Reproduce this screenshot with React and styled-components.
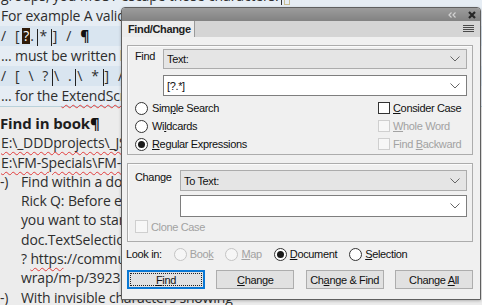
import React from "react";
import styled, { createGlobalStyle } from "styled-components";

const ui = `"Liberation Sans", Arial, sans-serif`;

const GlobalStyle = createGlobalStyle`
  html, body {
    margin: 0;
    padding: 0;
  }
  body {
    background: #ececec;
    overflow: hidden;
  }
`;

const Page = styled.div`
  position: relative;
  width: 482px;
  height: 305px;
  overflow: hidden;
  background: #ececec;
`;

/* ---------- document behind the panel ---------- */

const Doc = styled.div`
  margin-top: -14px;
  font-family: "Open Sans", "Noto Sans", sans-serif;
  font-size: 14px;
  letter-spacing: -0.15px;
  color: #2e2e2e;
  white-space: nowrap;
`;

const Block = styled.div`
  background: #e6edf4;
  border-bottom: 1px solid #b9d1da;
`;

const Line = styled.div`
  height: ${({ h }) => h || 19.3}px;
  line-height: ${({ h }) => h || 19.3}px;
  padding-left: 1px;
  background: ${({ code }) => (code ? "#d9e5f0" : "transparent")};
  letter-spacing: ${({ code }) => (code ? "2.6px" : "inherit")};
`;

const Hl = styled.span`
  display: inline-block;
  background: #2f1b09;
  color: #fff;
  line-height: 16px;
  padding: 0 1px;
  letter-spacing: 0;
`;

const Mark = styled.span`
  display: inline-block;
  width: 1px;
  height: 17px;
  background: #222;
  vertical-align: middle;
  margin: 0 1px;
`;

const Pilcrow = styled.span`
  font-weight: 700;
  color: #111;
`;

const Caret = styled.span`
  display: inline-block;
  width: 1px;
  height: 15px;
  background: #333;
  vertical-align: middle;
  margin-left: 2px;
  & + span {
    display: inline-block;
    width: 4px;
    height: 13px;
    margin-left: 2px;
    border: 1px solid #c9bd92;
    vertical-align: middle;
  }
`;

const Spell = styled.span`
  text-decoration: underline wavy #e23b3b;
  text-decoration-thickness: 1px;
  text-underline-offset: 3px;
`;

const Heading = styled.div`
  margin-top: 7px;
  height: 19.3px;
  line-height: 19.3px;
  font-size: 15px;
  font-weight: 700;
  color: #1e1e1e;
`;

const Item = styled.div`
  display: grid;
  grid-template-columns: 20px auto;
`;

const Marker = styled.div`
  line-height: 19.3px;
`;

/* ---------- Find/Change panel ---------- */

const Panel = styled.div`
  position: absolute;
  left: 121px;
  top: 7px;
  width: 360px;
  height: 293px;
  box-sizing: border-box;
  border: 1px solid #5f5f5f;
  border-radius: 4px 4px 0 0;
  overflow: hidden;
  background: #f0f0f0;
  font-family: ${ui};
  font-size: 11px;
  letter-spacing: -0.35px;
  color: #111;
  white-space: nowrap;
  box-shadow: 0 1px 3px rgba(0, 0, 0, 0.25);
`;

const TitleBar = styled.div`
  height: 13px;
  background: linear-gradient(#9c9c9c, #828282);
  display: flex;
  align-items: center;
  justify-content: flex-end;
  gap: 12px;
  padding-right: 4px;
`;

const TabStrip = styled.div`
  height: 16px;
  background: #d5d5d5;
  display: flex;
  align-items: stretch;
`;

const Tab = styled.div`
  width: 66px;
  padding-left: 6px;
  background: #ececec;
  border-right: 1px solid #9a9a9a;
  font-weight: 700;
  font-size: 11px;
  line-height: 16px;
  color: #222;
`;

const MenuButton = styled.div`
  margin-left: auto;
  margin-right: 6px;
  display: flex;
  align-items: center;
`;

const Body = styled.div`
  padding: 8px 7px 0 5px;
  display: flex;
  flex-direction: column;
`;

const Group = styled.div`
  border: 1px solid #acacac;
  box-shadow: inset 1px 1px 0 #fbfbfb;
  padding: ${({ pad }) => pad};
  margin-top: ${({ mt }) => mt || 0}px;
`;

const Fields = styled.div`
  display: grid;
  grid-template-columns: ${({ labelW }) => labelW}px 1fr;
  row-gap: ${({ gap }) => gap}px;
`;

const FieldLabel = styled.div`
  line-height: 14px;
  grid-row: span 2;
`;

const Select = styled.div`
  height: ${({ h }) => h}px;
  box-sizing: border-box;
  border: 1px solid #acacac;
  background: #e5e5e5;
  display: flex;
  align-items: center;
  justify-content: space-between;
  padding: 0 6px 0 3px;
`;

const Input = styled(Select)`
  background: #fff;
  border-color: #7e7e7e;
`;

const Options = styled.div`
  margin-top: 3px;
  display: grid;
  grid-template-columns: 1fr 89px;
  grid-auto-flow: column;
  grid-template-rows: repeat(3, 18px);
`;

const Choice = styled.label`
  display: flex;
  align-items: center;
  gap: ${({ gap }) => gap || 4}px;
  color: ${({ disabled }) => (disabled ? "#a2a2a2" : "#111")};
`;

const RadioDot = styled.span`
  width: 13px;
  height: 13px;
  box-sizing: border-box;
  border-radius: 50%;
  border: 1px solid ${({ disabled }) => (disabled ? "#c4c4c4" : "#333")};
  background: ${({ disabled }) => (disabled ? "#f6f6f6" : "#fff")};
  display: flex;
  align-items: center;
  justify-content: center;
  flex: none;

  &::after {
    content: "";
    width: 7px;
    height: 7px;
    border-radius: 50%;
    background: #1a1a1a;
    display: ${({ checked }) => (checked ? "block" : "none")};
  }
`;

const CheckBox = styled.span`
  width: ${({ size }) => size || 12}px;
  height: ${({ size }) => size || 12}px;
  box-sizing: border-box;
  border: 1px solid ${({ disabled }) => (disabled ? "#cfcfcf" : "#333")};
  background: ${({ disabled }) => (disabled ? "#f7f7f7" : "#fff")};
  flex: none;
`;

const U = styled.span`
  text-decoration: underline;
  text-underline-offset: 1px;
`;

const CloneRow = styled.div`
  margin-top: 1px;
  height: 17px;
  display: flex;
  align-items: center;
`;

const LookIn = styled.div`
  margin-top: 4px;
  margin-left: -1px;
  height: 16px;
  display: flex;
  align-items: center;
  gap: 12px;
`;

const ButtonRow = styled.div`
  margin-top: 8px;
  display: flex;
  justify-content: space-between;
`;

const Button = styled.div`
  width: 78px;
  height: 19px;
  box-sizing: border-box;
  border: 1px solid ${({ primary }) => (primary ? "#0a78d4" : "#adadad")};
  box-shadow: ${({ primary }) => (primary ? "inset 0 0 0 1px #0a78d4" : "none")};
  background: #e1e1e1;
  display: flex;
  align-items: center;
  justify-content: center;
  padding: 2px;
`;

const FocusRing = styled.span`
  flex: 1;
  align-self: stretch;
  display: flex;
  align-items: center;
  justify-content: center;
  outline: 1px dotted #222;
  outline-offset: -1px;
`;

const Chevron = () => (
  <svg width="10" height="6" viewBox="0 0 10 6">
    <polyline points="0.5,0.5 5,5 9.5,0.5" fill="none" stroke="#666" strokeWidth="1" />
  </svg>
);

const Radio = ({ label, checked, disabled, gap }) => (
  <Choice disabled={disabled} gap={gap}>
    <RadioDot checked={checked} disabled={disabled} />
    <span>{label}</span>
  </Choice>
);

const Check = ({ label, disabled, size, gap }) => (
  <Choice disabled={disabled} gap={gap || 3}>
    <CheckBox disabled={disabled} size={size} />
    <span>{label}</span>
  </Choice>
);

const FindChange = () => (
  <Panel>
    <TitleBar>
      <svg width="8" height="6" viewBox="0 0 8 6">
        <polyline points="3.5,0.5 1,3 3.5,5.5" fill="none" stroke="#d2d2d2" strokeWidth="1.2" />
        <polyline points="7.5,0.5 5,3 7.5,5.5" fill="none" stroke="#d2d2d2" strokeWidth="1.2" />
      </svg>
      <svg width="8" height="8" viewBox="0 0 8 8">
        <path d="M1 1 L7 7 M7 1 L1 7" stroke="#262626" strokeWidth="2.2" />
      </svg>
    </TitleBar>
    <TabStrip>
      <Tab>Find/Change</Tab>
      <MenuButton>
        <svg width="11" height="8" viewBox="0 0 11 8">
          <path d="M0 0.5 H11 M0 2.5 H11 M0 4.5 H11 M0 6.5 H11" stroke="#4a4a4a" strokeWidth="1" />
        </svg>
      </MenuButton>
    </TabStrip>
    <Body>
      <Group pad="3px 5px 1px 7px">
        <Fields labelW={28} gap={6}>
          <FieldLabel>Find</FieldLabel>
          <Select h={20}>
            <span>Text:</span>
            <Chevron />
          </Select>
          <Input h={21}>
            <span>[?.*]</span>
            <Chevron />
          </Input>
        </Fields>
        <Options>
          <Radio label={<>Sim<U>p</U>le Search</>} />
          <Radio label={<>Wi<U>l</U>dcards</>} />
          <Radio label={<><U>R</U>egular Expressions</>} checked />
          <Check label={<><U>C</U>onsider Case</>} />
          <Check label={<><U>W</U>hole Word</>} disabled />
          <Check label={<>Find <U>B</U>ackward</>} disabled />
        </Options>
      </Group>

      <Group pad="6px 5px 6px 7px" mt={8}>
        <Fields labelW={45} gap={4}>
          <FieldLabel>Change</FieldLabel>
          <Select h={21}>
            <span>To Text:</span>
            <Chevron />
          </Select>
          <Input h={22}>
            <span />
            <Chevron />
          </Input>
        </Fields>
        <CloneRow>
          <Check label="Clone Case" disabled size={13} />
        </CloneRow>
      </Group>

      <LookIn>
        <span>Look in:</span>
        <Radio label={<>Boo<U>k</U></>} disabled gap={3} />
        <Radio label={<><U>M</U>ap</>} disabled gap={3} />
        <Radio label={<><U>D</U>ocument</>} checked gap={3} />
        <Radio label={<><U>S</U>election</>} gap={3} />
      </LookIn>

      <ButtonRow>
        <Button primary>
          <FocusRing>
            <span>
              <U>F</U>ind
            </span>
          </FocusRing>
        </Button>
        <Button>
          <span>
            <U>C</U>hange
          </span>
        </Button>
        <Button>
          <span>
            Ch<U>a</U>nge &amp; Find
          </span>
        </Button>
        <Button>
          <span>
            Change <U>A</U>ll
          </span>
        </Button>
      </ButtonRow>
    </Body>
  </Panel>
);

export default function App() {
  return (
    <Page>
      <GlobalStyle />
      <Doc>
        <Block>
          <Line h={20}>
            groups, you MUST escape those characters.
            <Caret />
            <span />
          </Line>
          <Line h={20}>For example A valid GREP expression like</Line>
          <Line h={20} code>
            / [<Hl>?</Hl>.<Mark />*<Mark />] / <Pilcrow>¶</Pilcrow>
          </Line>
          <Line h={20}>... must be written like this in the script</Line>
          <Line h={20} code>
            / [ \ ?<Mark />\ .<Mark />\ *<Mark />] / <Pilcrow>¶</Pilcrow>
          </Line>
          <Line h={20}>
            ... for the <Spell>ExtendScript</Spell> string
          </Line>
        </Block>
        <Heading>
          Find in book<Pilcrow>¶</Pilcrow>
        </Heading>
        <Line>
          <Spell>E:\_DDDprojects\_JS-scripts\FMfindRE.jsx</Spell>
        </Line>
        <Line>
          <Spell>E:\FM-Specials\FM-scripts</Spell>
        </Line>
        <Item>
          <Marker>-)</Marker>
          <div>
            <Line>Find within a document</Line>
            <Line>Rick Q: Before executing a find, if</Line>
            <Line>you want to start at the beginning,</Line>
            <Line>doc.TextSelection = first paragraph</Line>
            <Line>
              ? <Spell>https</Spell>://community.adobe.com/t5/find-and-
            </Line>
            <Line>wrap/m-p/3923</Line>
          </div>
        </Item>
        <Item>
          <Marker>-)</Marker>
          <div>
            <Line>With invisible characters showing</Line>
          </div>
        </Item>
      </Doc>
      <FindChange />
    </Page>
  );
}
